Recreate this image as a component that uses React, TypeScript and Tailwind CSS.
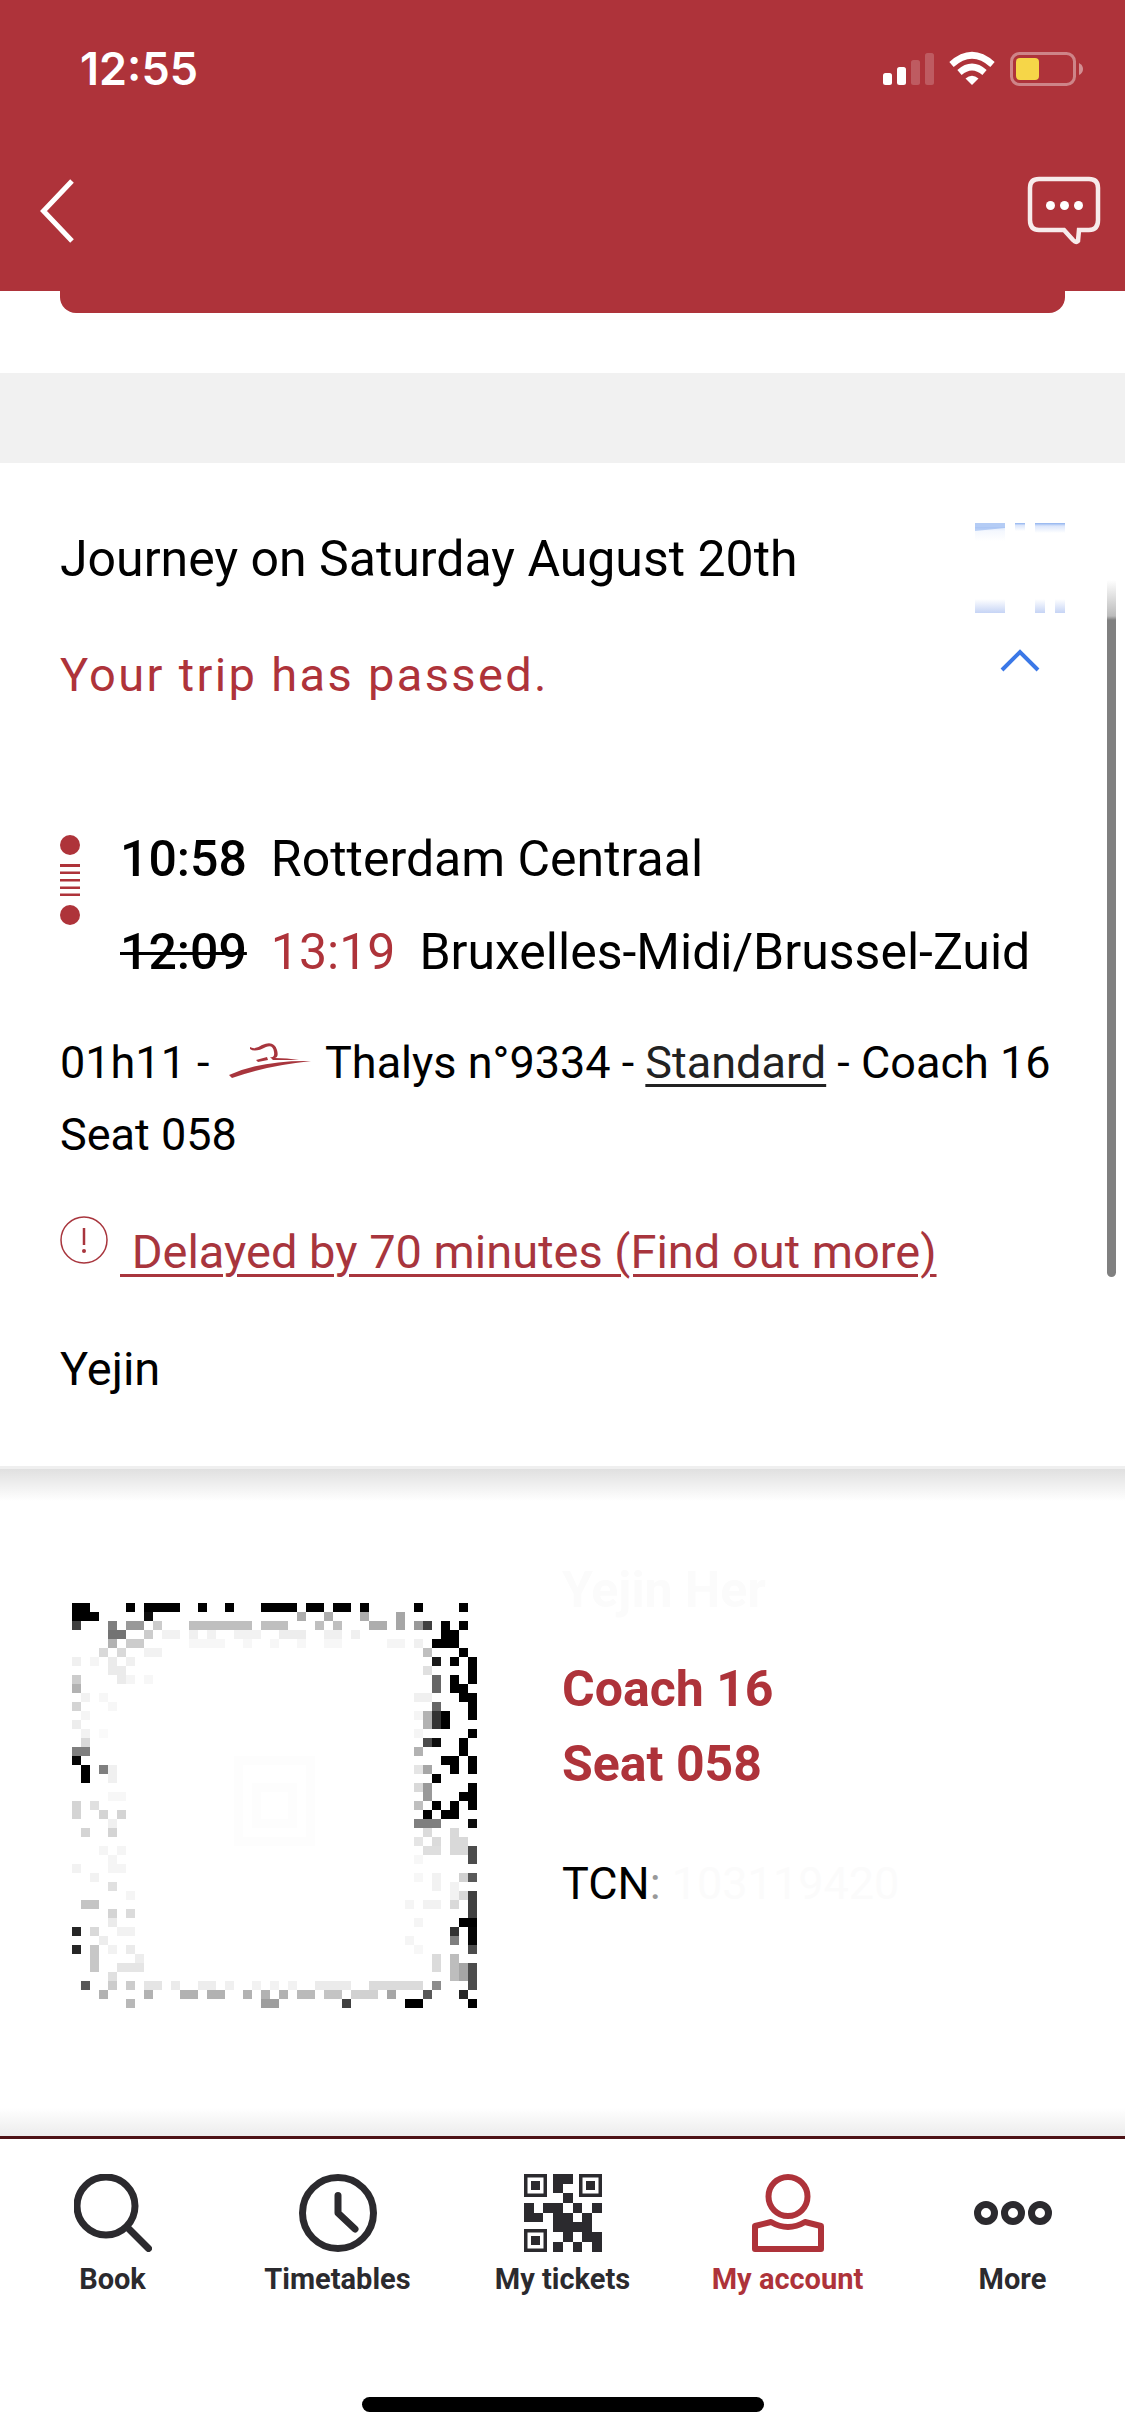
import { useState } from "react"
import type { ReactNode } from "react"

// x, y, width, height, shade (0-1) on the 45x45 ticket grid
type Cell = [number, number, number, number, number]

const CODE_CELLS: Cell[] = [
  [0, 0, 2, 1, 1], [6, 0, 1, 1, 1], [8, 0, 4, 1, 1], [14, 0, 1, 1, 1], [17, 0, 1, 1, 1], [21, 0, 4, 1, 1],
  [26, 0, 2, 1, 1], [29, 0, 2, 1, 1], [32, 0, 1, 1, 1], [38, 0, 1, 1, 1], [43, 0, 1, 1, 1],
  [0, 1, 3, 1, 1], [8, 1, 1, 1, 0.95], [25, 1, 1, 1, 0.32], [28, 1, 1, 1, 0.32], [32, 1, 1, 1, 0.32], [36, 1, 1, 2, 0.35],
  [0, 2, 1, 1, 0.75], [4, 2, 1, 1, 0.5], [6, 2, 2, 1, 0.4], [9, 2, 1, 1, 0.2], [13, 2, 7, 1, 0.25], [21, 2, 3, 1, 0.25],
  [27, 2, 1, 1, 0.25], [29, 2, 1, 1, 0.25], [33, 2, 2, 1, 0.32], [38, 2, 1, 1, 0.4], [39, 2, 1, 1, 0.75], [41, 2, 1, 1, 1], [43, 2, 1, 1, 1],
  [4, 3, 2, 1, 0.55], [8, 3, 1, 1, 0.2], [10, 3, 2, 1, 0.05], [13, 3, 1, 1, 0.06], [15, 3, 1, 1, 0.05], [18, 3, 3, 1, 0.05],
  [23, 3, 3, 1, 0.07], [28, 3, 2, 1, 0.06], [31, 3, 1, 1, 0.06], [41, 3, 2, 1, 1],
  [4, 4, 1, 1, 0.3], [6, 4, 2, 1, 0.2], [13, 4, 4, 1, 0.03], [19, 4, 1, 1, 0.03], [22, 4, 1, 1, 0.03], [25, 4, 1, 1, 0.03],
  [28, 4, 2, 1, 0.03], [35, 4, 2, 1, 0.04], [38, 4, 1, 1, 0.06], [40, 4, 3, 1, 1],
  [3, 5, 1, 1, 0.15], [5, 5, 1, 1, 0.15], [8, 5, 2, 1, 0.05], [39, 5, 1, 1, 0.25], [43, 5, 1, 1, 1],
  [0, 6, 1, 1, 0.06], [2, 6, 1, 1, 0.04], [4, 6, 1, 2, 0.08], [6, 6, 1, 1, 0.06], [40, 6, 1, 1, 0.9], [42, 6, 1, 1, 1], [44, 6, 1, 3, 1],
  [5, 7, 1, 2, 0.08], [39, 7, 1, 1, 0.12],
  [0, 8, 1, 1, 0.2], [6, 8, 1, 1, 0.04], [8, 8, 1, 1, 0.03], [40, 8, 1, 2, 0.6], [42, 8, 1, 1, 1],
  [0, 9, 1, 1, 0.3], [42, 9, 2, 1, 1],
  [1, 10, 1, 1, 0.05], [3, 10, 1, 1, 0.03], [38, 10, 2, 1, 0.06], [43, 10, 2, 1, 1],
  [0, 11, 1, 1, 0.17], [4, 11, 1, 1, 0.03], [40, 11, 1, 1, 0.6], [44, 11, 1, 2, 1],
  [1, 12, 1, 1, 0.04], [38, 12, 1, 1, 0.04], [39, 12, 1, 2, 0.3], [40, 12, 1, 2, 0.8], [41, 12, 1, 2, 1],
  [0, 13, 1, 1, 0.07], [1, 14, 1, 1, 0.05], [3, 14, 1, 1, 0.02], [38, 14, 1, 1, 0.04], [44, 14, 1, 1, 1],
  [1, 15, 1, 1, 0.15], [39, 15, 1, 1, 0.7], [40, 15, 1, 1, 0.95], [43, 15, 1, 2, 1],
  [0, 16, 2, 1, 0.5], [38, 16, 1, 1, 0.3],
  [0, 17, 1, 1, 0.98], [41, 17, 2, 1, 1], [44, 17, 1, 2, 1],
  [1, 18, 1, 2, 1], [3, 18, 1, 1, 0.5], [4, 18, 1, 2, 0.06], [38, 18, 1, 1, 0.1], [39, 18, 1, 1, 0.35], [42, 18, 1, 1, 1],
  [40, 19, 1, 1, 1],
  [38, 20, 1, 1, 0.15], [39, 20, 1, 2, 0.4], [44, 20, 1, 3, 1], [4, 21, 2, 1, 0.03], [43, 21, 1, 1, 1],
  [0, 22, 1, 2, 0.17], [2, 22, 1, 1, 0.12], [38, 22, 1, 1, 0.25], [40, 22, 1, 1, 1], [42, 22, 1, 2, 1],
  [3, 23, 1, 1, 0.17], [5, 23, 1, 1, 0.17], [39, 23, 1, 1, 1], [41, 23, 1, 1, 1],
  [4, 24, 1, 1, 0.06], [38, 24, 3, 1, 0.5], [44, 24, 1, 1, 0.95],
  [1, 25, 1, 1, 0.17], [4, 25, 1, 1, 0.17], [39, 25, 1, 1, 0.14], [42, 25, 1, 1, 0.15],
  [38, 26, 1, 1, 0.1], [40, 26, 1, 1, 0.14], [42, 26, 2, 1, 0.15],
  [3, 27, 1, 1, 0.04], [5, 27, 1, 1, 0.04], [39, 27, 2, 1, 0.13], [42, 27, 2, 1, 0.15], [44, 27, 1, 2, 0.7],
  [4, 28, 1, 1, 0.04], [38, 28, 1, 1, 0.03], [0, 29, 1, 1, 0.05], [4, 29, 2, 1, 0.04],
  [2, 30, 1, 1, 0.05], [38, 30, 1, 1, 0.03], [40, 30, 1, 2, 0.05], [43, 30, 1, 1, 0.18], [44, 30, 1, 1, 0.65],
  [4, 31, 1, 1, 0.12], [42, 31, 1, 2, 0.05],
  [6, 32, 1, 1, 0.04], [43, 32, 1, 1, 0.15], [44, 32, 1, 3, 0.75],
  [1, 33, 2, 1, 0.23], [37, 33, 1, 1, 0.04], [39, 33, 2, 1, 0.05], [42, 33, 1, 1, 0.15],
  [4, 34, 1, 1, 0.17], [6, 34, 1, 1, 0.14], [4, 35, 1, 1, 0.08], [38, 35, 1, 1, 0.04], [43, 35, 2, 1, 1],
  [0, 36, 1, 1, 0.85], [2, 36, 1, 1, 0.15], [5, 36, 2, 1, 0.05], [42, 36, 1, 1, 0.8], [44, 36, 1, 2, 0.98],
  [3, 37, 1, 1, 0.07], [37, 37, 1, 1, 0.04], [42, 37, 1, 1, 0.5],
  [0, 38, 1, 1, 0.85], [2, 38, 1, 3, 0.22], [4, 38, 1, 1, 0.05], [6, 38, 1, 1, 0.08], [38, 38, 1, 1, 0.03], [44, 38, 1, 1, 0.7],
  [7, 39, 1, 1, 0.07], [40, 39, 1, 2, 0.14], [42, 39, 1, 3, 0.26],
  [5, 40, 3, 1, 0.1], [43, 40, 1, 2, 0.35], [44, 40, 1, 3, 0.7],
  [4, 41, 1, 1, 0.12],
  [1, 42, 1, 1, 0.65], [4, 42, 1, 1, 0.2], [6, 42, 1, 1, 0.2], [8, 42, 2, 1, 0.1], [11, 42, 1, 1, 0.08], [14, 42, 2, 1, 0.07],
  [17, 42, 1, 1, 0.06], [20, 42, 1, 1, 0.05], [22, 42, 1, 1, 0.05], [24, 42, 1, 1, 0.05], [27, 42, 4, 1, 0.08], [33, 42, 6, 1, 0.14], [40, 42, 1, 1, 0.45],
  [3, 43, 1, 1, 0.3], [8, 43, 1, 1, 0.3], [12, 43, 2, 1, 0.3], [15, 43, 2, 1, 0.3], [19, 43, 1, 1, 0.3], [21, 43, 1, 1, 0.3],
  [23, 43, 1, 1, 0.3], [25, 43, 2, 1, 0.27], [28, 43, 2, 1, 0.23], [31, 43, 3, 1, 0.18], [35, 43, 1, 1, 0.35], [39, 43, 1, 1, 0.65], [43, 43, 1, 1, 0.85],
  [6, 44, 1, 1, 0.28], [21, 44, 2, 1, 0.38], [30, 44, 1, 1, 0.75], [37, 44, 2, 1, 1], [44, 44, 1, 1, 1],
]

function TicketCode() {
  return (
    <svg viewBox="0 0 45 45" shapeRendering="crispEdges" className="size-[405px] shrink-0" role="img" aria-label="Ticket code">
      {/* faint finder rings in the middle */}
      <g fill="none" stroke="#fdfdfd">
        <rect x="18.5" y="17.5" width="8" height="9" />
        <rect x="20.5" y="20.5" width="4" height="4" />
      </g>
      {CODE_CELLS.map(([x, y, w, h, shade]) => (
        <rect key={`${x}-${y}`} x={x} y={y} width={w} height={h} fill="#000" fillOpacity={shade} />
      ))}
    </svg>
  )
}

function StatusIcons() {
  return (
    <svg viewBox="0 0 202 36" className="h-9 w-[202px]" aria-hidden="true">
      <g fill="#fff">
        <rect x="0" y="22" width="9" height="12" rx="2.5" />
        <rect x="14" y="16" width="9" height="18" rx="2.5" />
        <rect x="28" y="9" width="9" height="25" rx="2.5" opacity="0.2" />
        <rect x="42" y="2" width="9" height="32" rx="2.5" opacity="0.2" />
        <path d="M89 34 L82.500 27.500 Q89 22 95.500 27.500Z" />
      </g>
      <g fill="none" stroke="#fff" strokeWidth="6.500">
        <path d="M68.500 13.500 Q89 -5 109.500 13.500" />
        <path d="M76.500 21.500 Q89 10.500 101.500 21.500" />
      </g>
      <rect x="128.500" y="2.500" width="63" height="31" rx="8" fill="none" stroke="#fff" strokeOpacity="0.4" strokeWidth="3" />
      <rect x="133" y="7" width="23" height="22" rx="4" fill="#f6d648" />
      <path d="M196 12 Q200 14 200 18 T196 24Z" fill="#fff" fillOpacity="0.45" />
    </svg>
  )
}

function Header() {
  return (
    <header className="bg-[#ae333a] text-white">
      <div className="flex items-center justify-between pt-11 pr-10 pl-20">
        <span className="font-['Inter'] text-[45px] leading-[50px] font-semibold">12:55</span>
        <StatusIcons />
      </div>
      <div className="flex h-[197px] items-center justify-between pt-9 pr-6 pl-10">
        <button type="button" aria-label="Back">
          <svg viewBox="0 0 34 64" className="h-16 w-[34px]" fill="none" stroke="currentColor" strokeWidth="5">
            <path d="M32 2 L3.500 32 L32 62" />
          </svg>
        </button>
        <button type="button" aria-label="Chat">
          <svg viewBox="0 0 74 70" className="h-[70px] w-[74px]" fill="none" stroke="currentColor" strokeOpacity="0.9" strokeWidth="4.500">
            <path d="M12 3 H62 Q71 3 71 12 V44 Q71 54 62 54 H52 L51 65 Q49 67 46 64 L37 54 H12 Q3 54 3 44 V12 Q3 3 12 3Z" />
            <g fill="currentColor" stroke="none">
              <circle cx="23.500" cy="29.500" r="4.500" />
              <circle cx="37.500" cy="29.500" r="4.500" />
              <circle cx="51.500" cy="29.500" r="4.500" />
            </g>
          </svg>
        </button>
      </div>
    </header>
  )
}

function BookingCode() {
  return (
    <svg viewBox="0 0 90 90" className="size-[90px]" aria-hidden="true">
      <defs>
        <linearGradient id="fade-down" x1="0" y1="0" x2="0" y2="1">
          <stop offset="0" stopColor="#8fb2ef" />
          <stop offset="0.300" stopColor="#dbe6fb" />
          <stop offset="1" stopColor="#fff" />
        </linearGradient>
        <linearGradient id="fade-up" x1="0" y1="1" x2="0" y2="0">
          <stop offset="0" stopColor="#c6d4f5" />
          <stop offset="1" stopColor="#fff" />
        </linearGradient>
      </defs>
      <path fill="#b4ccf5" d="M0 0 H30 V5 L0 8Z" />
      <g fill="url(#fade-down)">
        <rect x="0" y="4" width="30" height="14" opacity="0.300" />
        <rect x="40" y="0" width="10" height="8" />
        <rect x="60" y="0" width="30" height="10" />
      </g>
      <g fill="url(#fade-up)">
        <rect x="0" y="76" width="30" height="14" />
        <rect x="60" y="76" width="10" height="14" />
        <rect x="80" y="76" width="10" height="14" />
      </g>
    </svg>
  )
}

function TimelineMark() {
  return (
    <svg viewBox="0 0 20 90" className="mt-[22px] h-[90px] w-5 shrink-0 fill-[#ae333a]" aria-hidden="true">
      <circle cx="10" cy="10" r="10" />
      <rect x="0" y="29" width="20" height="3" />
      <rect x="0" y="36.500" width="20" height="2.500" />
      <rect x="0" y="44" width="20" height="2.500" />
      <rect x="0" y="51.500" width="20" height="2.500" />
      <rect x="0" y="58.500" width="20" height="2.500" />
      <circle cx="10" cy="80" r="10" />
    </svg>
  )
}

function ThalysLogo() {
  return (
    <svg viewBox="0 0 82 36" className="mr-1 ml-2 inline-block h-9 w-[82px] align-baseline" role="img" aria-label="Thalys">
      <g fill="#a8353d">
        <path d="M0 33 Q34 18 82 19 Q36 24 3 36Z" />
        <path d="M21 5 Q26 8 33 3 Q45 -2 48 8 Q50 15 46 16 Q58 16 70 18 L44 18 L41 15 Q46 16 45 10 Q44 2 37 5 Q26 11 21 7Z" />
        <path d="M27 18 L38 15 L39 18 L29 20Z" />
      </g>
    </svg>
  )
}

function Journey() {
  const [open, setOpen] = useState(true)

  return (
    <section className="px-[60px] pt-[60px] pb-[61px]">
      <div className="flex justify-between">
        <div>
          <h2 className="text-[50px] leading-[72px]">Journey on Saturday August 20th</h2>
          <p className="mt-11 text-[47px] leading-[72px] tracking-wider text-[#ae333a]">Your trip has passed.</p>
        </div>
        <div className="flex flex-col items-center gap-9">
          <BookingCode />
          <button type="button" aria-expanded={open} aria-label="Journey details" onClick={() => setOpen(!open)}>
            <svg viewBox="0 0 40 24" className="h-6 w-10" fill="none" stroke="#3b78e7" strokeWidth="4">
              <path d={open ? "M2 21 L20 3 L38 21" : "M2 3 L20 21 L38 3"} />
            </svg>
          </button>
        </div>
      </div>

      {open && (
        <>
          <div className="mt-[102px] flex gap-10">
            <TimelineMark />
            <div className="text-[50px] leading-[93px]">
              <div className="flex gap-6">
                <time className="font-medium">10:58</time>
                <span>Rotterdam Centraal</span>
              </div>
              <div className="flex gap-6">
                <s className="font-medium decoration-[3px]">12:09</s>
                <time className="text-[#ae333a]">13:19</time>
                <span>Bruxelles-Midi/Brussel-Zuid</span>
              </div>
            </div>
          </div>

          <p className="mt-7 text-[45px] leading-[72px]">
            01h11 - <ThalysLogo /> Thalys n°9334 -{" "}
            <a href="#standard" className="text-[#222] underline decoration-[3px] underline-offset-[6px]">Standard</a> - Coach 16
            <br />
            Seat 058
          </p>

          <div className="mt-[45px] flex items-start gap-3 text-[#a8353d]">
            <svg viewBox="0 0 48 48" className="size-12 shrink-0" fill="none" stroke="currentColor" strokeWidth="1.500" aria-hidden="true">
              <circle cx="24" cy="24" r="23" />
              <path d="M24 12 V29" strokeWidth="2.500" />
              <circle cx="24" cy="35" r="2" fill="currentColor" stroke="none" />
            </svg>
            <a href="#delay" className="text-[47px] leading-[72px] whitespace-pre underline decoration-[3px] underline-offset-[6px]">
              {" Delayed by 70 minutes (Find out more)"}
            </a>
          </div>

          <p className="mt-[45px] text-[47px] leading-[72px]">Yejin</p>
        </>
      )}
    </section>
  )
}

function Ticket() {
  return (
    <section className="border-t-[3px] border-[#efefef]">
      <div className="h-8 bg-gradient-to-b from-[#e0e0e0] to-white" />
      <div className="flex gap-[85px] px-[72px] pt-13">
        <div className="pt-[50px]">
          <TicketCode />
        </div>
        <div className="text-[50px] leading-[75px] font-bold text-[#ae333a]">
          <p className="text-[#fbfbfb]">Yejin Her</p>
          <p className="mt-6">Coach 16</p>
          <p>Seat 058</p>
          <p className="mt-11 text-[45px] font-normal text-black">
            TCN<span className="text-[#999]">:</span> <span className="text-[#fbfbfb]">103119420</span>
          </p>
        </div>
      </div>
    </section>
  )
}

const SearchIcon = () => (
  <svg viewBox="0 0 78 78" className="size-[78px]" fill="none" stroke="currentColor" strokeWidth="7">
    <circle cx="32" cy="32" r="29" />
    <path d="M54 54 L74.500 74.500" strokeLinecap="round" />
  </svg>
)

const ClockIcon = () => (
  <svg viewBox="0 0 78 78" className="size-[78px]" fill="none" stroke="currentColor" strokeWidth="7">
    <circle cx="39" cy="39" r="35.500" />
    <path d="M39 21.500 V39 L56 55" strokeLinecap="round" strokeLinejoin="round" />
  </svg>
)

const TicketsIcon = () => (
  <svg viewBox="0 0 78 78" className="size-[78px]" fill="currentColor">
    <g fill="none" stroke="currentColor" strokeWidth="3.500">
      <rect x="1.750" y="1.750" width="19.500" height="19.500" />
      <rect x="56.750" y="1.750" width="19.500" height="19.500" />
      <rect x="1.750" y="56.750" width="19.500" height="19.500" />
    </g>
    <rect x="7" y="7" width="9" height="9" />
    <rect x="62" y="7" width="9" height="9" />
    <rect x="7" y="62" width="9" height="9" />
    <path d="M29 0H49V10H39V19H29Z M39 19H49V29H39Z M0 29H10V39H19V48H0Z M19 29H39V39H49V48H58V39H68V58H78V78H68V68H58V58H49V68H39V58H29V39H19Z M49 29H58V39H49Z M68 29H78V39H68Z M29 68H39V78H29Z M49 68H58V78H49Z" />
  </svg>
)

const AccountIcon = () => (
  <svg viewBox="0 0 78 78" className="size-[78px]" fill="none" stroke="currentColor" strokeWidth="6">
    <circle cx="39" cy="22.500" r="19.500" />
    <path d="M6 52 L22 48 Q39 58 56 48 L72 52 V75 H6Z" strokeLinejoin="round" />
  </svg>
)

const MoreIcon = () => (
  <svg viewBox="0 0 78 78" className="size-[78px]" fill="none" stroke="currentColor" strokeWidth="7">
    <circle cx="12" cy="39" r="8.500" />
    <circle cx="39" cy="39" r="8.500" />
    <circle cx="66" cy="39" r="8.500" />
  </svg>
)

const TABS: { label: string; icon: ReactNode }[] = [
  { label: "Book", icon: <SearchIcon /> },
  { label: "Timetables", icon: <ClockIcon /> },
  { label: "My tickets", icon: <TicketsIcon /> },
  { label: "My account", icon: <AccountIcon /> },
  { label: "More", icon: <MoreIcon /> },
]

function TabBar() {
  const [active, setActive] = useState("My account")

  return (
    <div>
      <div className="h-7 bg-gradient-to-t from-[#ececec] to-white" />
      <nav className="grid grid-cols-5 border-t-[3px] border-[#4d1216] bg-white pt-[35px]">
        {TABS.map(({ label, icon }) => (
          <button
            key={label}
            type="button"
            onClick={() => setActive(label)}
            className={
              "flex flex-col items-center gap-2 text-[29px] leading-[38px] font-bold " +
              (label === active ? "text-[#ae333a]" : "text-[#2b2a2e]")
            }
          >
            {icon}
            <span>{label}</span>
          </button>
        ))}
      </nav>
      <div className="flex justify-center pt-[99px] pb-6">
        <div className="h-[15px] w-[402px] rounded-full bg-black" />
      </div>
    </div>
  )
}

export default function App() {
  return (
    <div className="relative flex min-h-screen flex-col bg-white font-['Roboto',sans-serif] text-black">
      <Header />
      <main className="flex-1">
        <div className="px-[60px] pb-[60px]">
          <div className="h-[22px] rounded-b-2xl bg-[#ae333a]" />
        </div>
        <div className="h-[90px] bg-[#f1f1f1]" />
        <Journey />
        <Ticket />
      </main>
      <TabBar />
      {/* scroll thumb, fading in at the top */}
      <div className="absolute top-[580px] right-[9px] h-[697px] w-[9px] rounded-b-full bg-[linear-gradient(#fff,#bbb_36px,#808080_40px)]" />
    </div>
  )
}
